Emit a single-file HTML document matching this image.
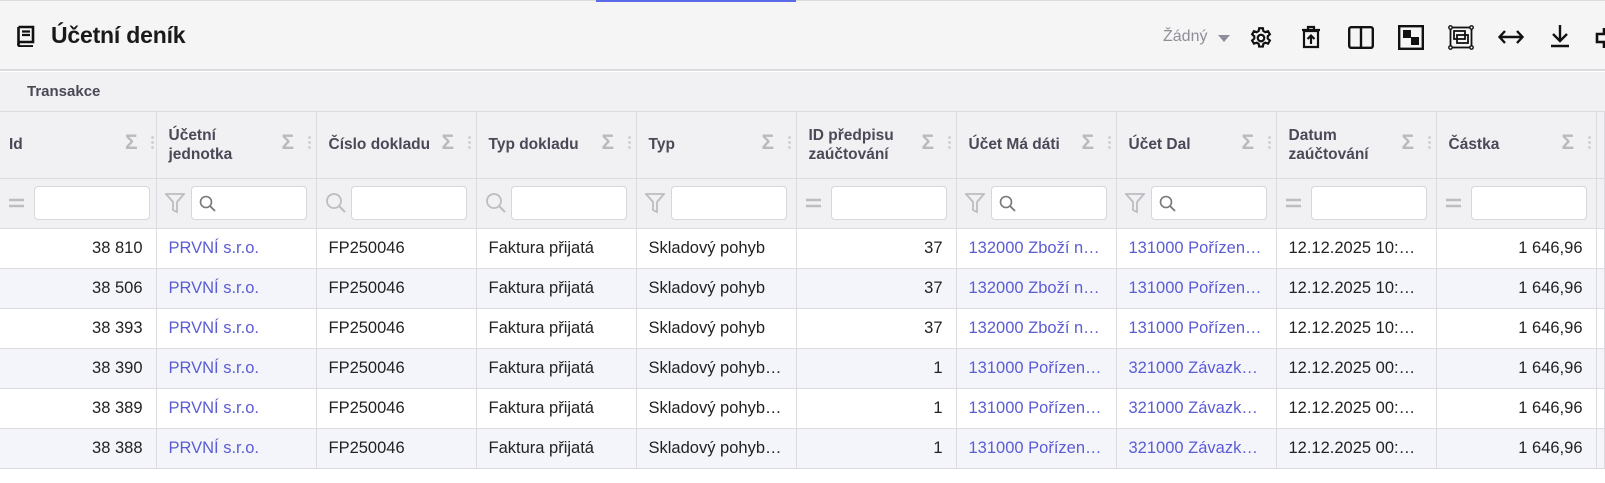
<!DOCTYPE html>
<html><head><meta charset="utf-8"><style>
*{margin:0;padding:0;box-sizing:border-box}
body{width:1605px;height:483px;overflow:hidden;background:#fff;font-family:"Liberation Sans",Arial,sans-serif;position:relative}
#top{position:absolute;left:0;top:0;width:1605px;height:71px;background:#f5f5f6;border-top:1px solid #dcdce0;border-bottom:2px solid #dcdce0}
#blue{position:absolute;left:596px;top:0;width:200px;height:2px;background:#5b6ae6}
#title{position:absolute;left:51px;top:22px;font-size:23px;color:#1a1a1a;font-weight:bold;letter-spacing:-0.2px}
#tabs{position:absolute;left:0;top:72px;width:1605px;height:40px;background:#f1f1f3;border-bottom:1px solid #dcdce0}
#tabs span{position:absolute;left:27px;top:11px;font-weight:bold;font-size:15px;color:#4b4857}
table{position:absolute;left:0;top:112px;border-collapse:collapse;table-layout:fixed;width:1605px}
td,th{border:1px solid #dcdce0;border-top:none;position:relative;white-space:nowrap;overflow:hidden}
th{height:66px;background:#f1f1f3;text-align:left;font-size:15.5px;color:#4b4857;padding-left:12px;line-height:19px;font-weight:bold;vertical-align:middle}
th .s{position:absolute;left:125px;top:21px;font-size:21px;color:#b9b9bf;font-weight:bold}
th .d{position:absolute;left:151px;top:23px;width:3px;height:15px;background:radial-gradient(circle,#cfcfd4 1.3px,transparent 1.6px) 0 0/3px 5px}
tr.f td{height:50px;background:#f1f1f3}
.in{position:absolute;left:34px;top:7px;width:116px;height:34px;background:#fff;border:1px solid #d6d6db;border-radius:4px}
.ic{position:absolute;left:8px;top:15px}
tr.r td{height:40px;font-size:16.5px;color:#222;padding-left:12px;padding-right:12px;text-overflow:ellipsis}
tr.r:nth-child(even) td{background:#f4f5fb}
tr.r td.n{text-align:right;padding-right:13px}
tr.r td.l{color:#5b5bd6}
</style></head><body>
<div id="top"></div><div id="blue"></div>
<svg style="position:absolute;left:15px;top:25px" width="22" height="22" viewBox="0 0 22 22"><path d="M3.5 2h14.5v15H5.5a2.2 2.2 0 0 0 0 4.4H18M3.5 2v17.5" fill="none" stroke="#111" stroke-width="2.6"/><path d="M7 6.5h8M7 10h8" stroke="#111" stroke-width="2.2"/></svg>
<div id="title">Účetní deník</div>
<div style="position:absolute;left:1163px;top:28px;font-size:16px;color:#8e8e99">Žádný</div>
<svg style="position:absolute;left:1218px;top:35px" width="12" height="7"><path d="M0 0h12L6 7z" fill="#8e8e99"/></svg>
<svg style="position:absolute;left:1248px;top:25px" width="26" height="26" viewBox="0 0 24 24"><path d="M10.3 2h3.4l.5 2.6 1.8 1 2.5-.9 1.7 2.9-2 1.8v2.1l2 1.8-1.7 2.9-2.5-.9-1.8 1-.5 2.6h-3.4l-.5-2.6-1.8-1-2.5.9-1.7-2.9 2-1.8V9.4l-2-1.8 1.7-2.9 2.5.9 1.8-1z" fill="none" stroke="#111" stroke-width="2" transform="translate(0 1)"/><circle cx="12" cy="12" r="3" fill="none" stroke="#111" stroke-width="2"/></svg>
<svg style="position:absolute;left:1300px;top:25px" width="22" height="25" viewBox="0 0 22 25"><path d="M4 6h14v16H4z M2 5h18 M8 5V2h6v3" fill="none" stroke="#111" stroke-width="2.2"/><path d="M11 19v-8M7.5 14l3.5-3.5 3.5 3.5" fill="none" stroke="#111" stroke-width="2.2"/></svg>
<svg style="position:absolute;left:1348px;top:26px" width="26" height="23"><rect x="1.2" y="1.2" width="23.6" height="20.6" rx="2" fill="none" stroke="#111" stroke-width="2.4"/><path d="M13 1v21" stroke="#111" stroke-width="2.4"/></svg>
<svg style="position:absolute;left:1398px;top:25px" width="26" height="25"><rect x="1.2" y="1.2" width="23.6" height="22.6" fill="none" stroke="#111" stroke-width="2.4"/><rect x="5" y="5" width="8" height="8" fill="#111"/><rect x="13" y="12" width="8" height="8" fill="#111"/></svg>
<svg style="position:absolute;left:1448px;top:25px" width="26" height="25"><rect x="2.5" y="2.5" width="21" height="20" fill="none" stroke="#111" stroke-width="1.8"/><rect x="6" y="6" width="11" height="8" fill="none" stroke="#111" stroke-width="1.8"/><rect x="9" y="10" width="11" height="8" fill="none" stroke="#111" stroke-width="1.8"/><g fill="#fff" stroke="#111" stroke-width="1.4"><circle cx="2.5" cy="2.5" r="1.7"/><circle cx="23.5" cy="2.5" r="1.7"/><circle cx="2.5" cy="22.5" r="1.7"/><circle cx="23.5" cy="22.5" r="1.7"/></g></svg>
<svg style="position:absolute;left:1498px;top:29px" width="26" height="16"><path d="M2 8h22M7 2L1.5 8 7 14M19 2l5.5 6L19 14" fill="none" stroke="#111" stroke-width="2.4"/></svg>
<svg style="position:absolute;left:1550px;top:24px" width="20" height="24"><path d="M10 1v15M3 10l7 7 7-7M1 22h18" fill="none" stroke="#111" stroke-width="2.4"/></svg>
<svg style="position:absolute;left:1595px;top:26px" width="10" height="24"><path d="M9 2v6H2v8h7v6" fill="none" stroke="#111" stroke-width="2.6"/></svg>
<div id="tabs"><span>Transakce</span></div>
<table>
<colgroup><col style="width:156px"><col style="width:160px"><col style="width:160px"><col style="width:160px"><col style="width:160px"><col style="width:160px"><col style="width:160px"><col style="width:160px"><col style="width:160px"><col style="width:160px"><col></colgroup>
<tr>
<th style="border-left:none;padding-left:9px">Id<span class="s">Σ</span><i class="d"></i></th>
<th>Účetní<br>jednotka<span class="s">Σ</span><i class="d"></i></th>
<th>Číslo dokladu<span class="s">Σ</span><i class="d"></i></th>
<th>Typ dokladu<span class="s">Σ</span><i class="d"></i></th>
<th>Typ<span class="s">Σ</span><i class="d"></i></th>
<th>ID předpisu<br>zaúčtování<span class="s">Σ</span><i class="d"></i></th>
<th>Účet Má dáti<span class="s">Σ</span><i class="d"></i></th>
<th>Účet Dal<span class="s">Σ</span><i class="d"></i></th>
<th>Datum<br>zaúčtování<span class="s">Σ</span><i class="d"></i></th>
<th>Částka<span class="s">Σ</span><i class="d"></i></th>
<th></th>
</tr>
<tr class="f">
<td style="border-left:none"><svg class="ic" width="18" height="18"><path d="M1 6h15M1 12h15" stroke="#bcbcc2" stroke-width="2.5"/></svg><div class="in"></div></td>
<td><svg class="ic" width="20" height="22" style="top:13px"><path d="M1 2h18l-7 8v10l-4-2v-8z" fill="none" stroke="#bcbcc2" stroke-width="1.8"/></svg><div class="in"><svg style="position:absolute;left:7px;top:8px" width="18" height="18"><circle cx="7" cy="7" r="5.5" fill="none" stroke="#777" stroke-width="1.6"/><path d="M11 11l5 5" stroke="#777" stroke-width="1.8"/></svg></div></td>
<td><svg class="ic" width="22" height="22" style="top:13px"><circle cx="9" cy="9" r="7" fill="none" stroke="#bcbcc2" stroke-width="1.8"/><path d="M14 14l6 6" stroke="#bcbcc2" stroke-width="2"/></svg><div class="in"></div></td>
<td><svg class="ic" width="22" height="22" style="top:13px"><circle cx="9" cy="9" r="7" fill="none" stroke="#bcbcc2" stroke-width="1.8"/><path d="M14 14l6 6" stroke="#bcbcc2" stroke-width="2"/></svg><div class="in"></div></td>
<td><svg class="ic" width="20" height="22" style="top:13px"><path d="M1 2h18l-7 8v10l-4-2v-8z" fill="none" stroke="#bcbcc2" stroke-width="1.8"/></svg><div class="in"></div></td>
<td><svg class="ic" width="18" height="18"><path d="M1 6h15M1 12h15" stroke="#bcbcc2" stroke-width="2.5"/></svg><div class="in"></div></td>
<td><svg class="ic" width="20" height="22" style="top:13px"><path d="M1 2h18l-7 8v10l-4-2v-8z" fill="none" stroke="#bcbcc2" stroke-width="1.8"/></svg><div class="in"><svg style="position:absolute;left:7px;top:8px" width="18" height="18"><circle cx="7" cy="7" r="5.5" fill="none" stroke="#777" stroke-width="1.6"/><path d="M11 11l5 5" stroke="#777" stroke-width="1.8"/></svg></div></td>
<td><svg class="ic" width="20" height="22" style="top:13px"><path d="M1 2h18l-7 8v10l-4-2v-8z" fill="none" stroke="#bcbcc2" stroke-width="1.8"/></svg><div class="in"><svg style="position:absolute;left:7px;top:8px" width="18" height="18"><circle cx="7" cy="7" r="5.5" fill="none" stroke="#777" stroke-width="1.6"/><path d="M11 11l5 5" stroke="#777" stroke-width="1.8"/></svg></div></td>
<td><svg class="ic" width="18" height="18"><path d="M1 6h15M1 12h15" stroke="#bcbcc2" stroke-width="2.5"/></svg><div class="in"></div></td>
<td><svg class="ic" width="18" height="18"><path d="M1 6h15M1 12h15" stroke="#bcbcc2" stroke-width="2.5"/></svg><div class="in"></div></td>
<td></td>
</tr>
<tr class="r"><td class="n" style="border-left:none">38 810</td><td class="l">PRVNÍ s.r.o.</td><td>FP250046</td><td>Faktura přijatá</td><td>Skladový pohyb</td><td class="n">37</td><td class="l">132000 Zboží na skladě</td><td class="l">131000 Pořízení zboží</td><td>12.12.2025 10:15:33</td><td class="n">1 646,96</td><td></td></tr>
<tr class="r"><td class="n" style="border-left:none">38 506</td><td class="l">PRVNÍ s.r.o.</td><td>FP250046</td><td>Faktura přijatá</td><td>Skladový pohyb</td><td class="n">37</td><td class="l">132000 Zboží na skladě</td><td class="l">131000 Pořízení zboží</td><td>12.12.2025 10:15:33</td><td class="n">1 646,96</td><td></td></tr>
<tr class="r"><td class="n" style="border-left:none">38 393</td><td class="l">PRVNÍ s.r.o.</td><td>FP250046</td><td>Faktura přijatá</td><td>Skladový pohyb</td><td class="n">37</td><td class="l">132000 Zboží na skladě</td><td class="l">131000 Pořízení zboží</td><td>12.12.2025 10:15:33</td><td class="n">1 646,96</td><td></td></tr>
<tr class="r"><td class="n" style="border-left:none">38 390</td><td class="l">PRVNÍ s.r.o.</td><td>FP250046</td><td>Faktura přijatá</td><td>Skladový pohyb příjem</td><td class="n">1</td><td class="l">131000 Pořízení zboží</td><td class="l">321000 Závazky z obchodních vztahů</td><td>12.12.2025 00:00:00</td><td class="n">1 646,96</td><td></td></tr>
<tr class="r"><td class="n" style="border-left:none">38 389</td><td class="l">PRVNÍ s.r.o.</td><td>FP250046</td><td>Faktura přijatá</td><td>Skladový pohyb příjem</td><td class="n">1</td><td class="l">131000 Pořízení zboží</td><td class="l">321000 Závazky z obchodních vztahů</td><td>12.12.2025 00:00:00</td><td class="n">1 646,96</td><td></td></tr>
<tr class="r"><td class="n" style="border-left:none">38 388</td><td class="l">PRVNÍ s.r.o.</td><td>FP250046</td><td>Faktura přijatá</td><td>Skladový pohyb příjem</td><td class="n">1</td><td class="l">131000 Pořízení zboží</td><td class="l">321000 Závazky z obchodních vztahů</td><td>12.12.2025 00:00:00</td><td class="n">1 646,96</td><td></td></tr>
</table>
</body></html>
